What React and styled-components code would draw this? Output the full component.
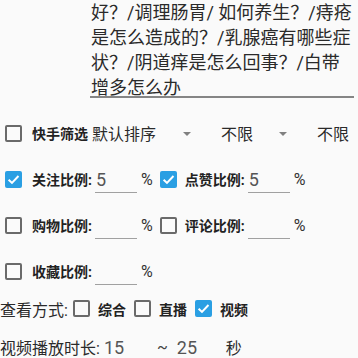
import React from "react";
import styled, { createGlobalStyle } from "styled-components";

const GlobalStyle = createGlobalStyle`
  html, body {
    margin: 0;
    padding: 0;
    background: #fafafa;
  }
  body {
    font-family: Roboto, "Noto Sans CJK SC", sans-serif;
    color: #222;
  }
`;

const Page = styled.div`
  width: 358px;
  height: 358px;
  overflow: hidden;
  background: #fafafa;
`;

const Keywords = styled.div`
  margin-left: 90px;
  width: 263px;
  height: 96px;
  font-size: 18px;
  line-height: 25px;
  color: #2a2a2a;
  border-bottom: 2px solid #858585;
  padding-left: 1px;
  box-sizing: content-box;
`;

const Line = styled.div`
  white-space: nowrap;
`;

const Form = styled.div`
  margin-top: 12px;
  display: flex;
  flex-direction: column;
`;

const Row = styled.div`
  display: flex;
  align-items: center;
  height: ${(p) => p.$h || 46}px;
  padding-left: ${(p) => (p.$indent ? 5 : 0)}px;
  white-space: nowrap;
`;

const Box = styled.span`
  width: 17px;
  height: 17px;
  min-width: 17px;
  flex: none;
  box-sizing: border-box;
  border-radius: 2px;
  border: 2px solid ${(p) => (p.$on ? "#2a9fe3" : "#6a6a6a")};
  background: ${(p) => (p.$on ? "#2a9fe3" : "transparent")};
  display: flex;
  align-items: center;
  justify-content: center;
  margin-right: ${(p) => p.$mr ?? 8}px;
`;

const BoldLabel = styled.span`
  flex: none;
  font-size: 14px;
  font-weight: 700;
  color: #222;
  margin-right: ${(p) => p.$mr ?? 0}px;
`;

const Label = styled.span`
  flex: none;
  font-size: 16px;
  color: #2a2a2a;
  margin-right: ${(p) => p.$mr ?? 0}px;
`;

const Input = styled.span`
  flex: none;
  width: ${(p) => p.$w || 42}px;
  height: 25px;
  margin: 0 4px 0 3px;
  font-size: 18px;
  line-height: 23px;
  color: #555;
  padding-left: 1px;
  box-sizing: border-box;
  border-bottom: ${(p) => (p.$noline ? "none" : "1px solid #a0a0a0")};
  transform: translateY(1px);
`;

const Percent = styled.span`
  flex: none;
  font-size: 16px;
  color: #333;
  margin-right: 7px;
`;

const Spinners = styled.div`
  display: flex;
  gap: 30px;
  margin-left: 4px;
`;

const Spinner = styled.div`
  width: ${(p) => p.$w}px;
  flex: none;
  display: flex;
  align-items: center;
  justify-content: space-between;
  font-size: 16px;
  color: #2a2a2a;
`;

const Caret = styled.span`
  width: 0;
  height: 0;
  border-left: 4px solid transparent;
  border-right: 4px solid transparent;
  border-top: 4px solid #808080;
  margin-top: 2px;
`;

const Tilde = styled.span`
  flex: none;
  font-size: 16px;
  color: #444;
  margin: 0 5px 0 2px;
`;

const Check = ({ on, mr }) => (
  <Box $on={on} $mr={mr}>
    {on && (
      <svg width="13" height="13" viewBox="0 0 12 12">
        <path d="M1.5 6.2 L4.6 9.2 L10.6 2.8" fill="none" stroke="#fff" strokeWidth="1.8" />
      </svg>
    )}
  </Box>
);

export default function App() {
  return (
    <Page>
      <GlobalStyle />
      <Keywords>
        <Line>好？/调理肠胃/ 如何养生？/痔疮</Line>
        <Line>是怎么造成的？/乳腺癌有哪些症</Line>
        <Line>状？/阴道痒是怎么回事？/白带</Line>
        <Line>增多怎么办</Line>
      </Keywords>
      <Form>
        <Row $indent>
          <Check mr={10} />
          <BoldLabel>快手筛选</BoldLabel>
          <Spinners>
            <Spinner $w={99}>
              默认排序
              <Caret />
            </Spinner>
            <Spinner $w={66}>
              不限
              <Caret />
            </Spinner>
            <Spinner $w={60}>不限</Spinner>
          </Spinners>
        </Row>
        <Row $indent>
          <Check on mr={10} />
          <BoldLabel>关注比例:</BoldLabel>
          <Input>5</Input>
          <Percent>%</Percent>
          <Check on />
          <BoldLabel>点赞比例:</BoldLabel>
          <Input>5</Input>
          <Percent>%</Percent>
        </Row>
        <Row $indent>
          <Check mr={10} />
          <BoldLabel>购物比例:</BoldLabel>
          <Input />
          <Percent>%</Percent>
          <Check />
          <BoldLabel>评论比例:</BoldLabel>
          <Input />
          <Percent>%</Percent>
        </Row>
        <Row $indent>
          <Check mr={10} />
          <BoldLabel>收藏比例:</BoldLabel>
          <Input />
          <Percent>%</Percent>
        </Row>
        <Row $h={29}>
          <Label $mr={5}>查看方式:</Label>
          <Check />
          <BoldLabel $mr={8}>综合</BoldLabel>
          <Check />
          <BoldLabel $mr={8}>直播</BoldLabel>
          <Check on />
          <BoldLabel>视频</BoldLabel>
        </Row>
        <Row $h={48}>
          <Label>视频播放时长:</Label>
          <Input $w={48} $noline>
            15
          </Input>
          <Tilde>~</Tilde>
          <Input $w={46} $noline>
            25
          </Input>
          <Label>秒</Label>
        </Row>
      </Form>
    </Page>
  );
}
